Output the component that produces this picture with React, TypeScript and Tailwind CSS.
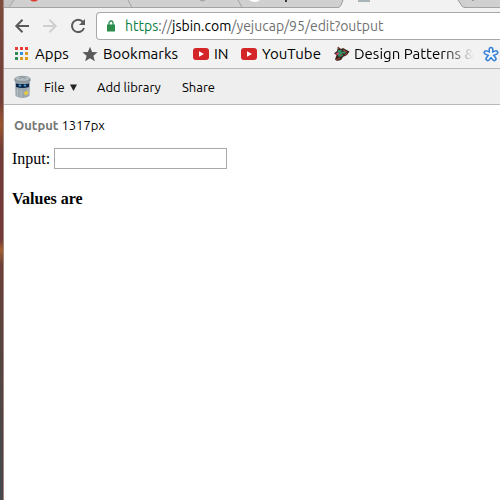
import type { ReactNode } from 'react'

function TabStrip() {
  return (
    <div className="h-2 overflow-hidden bg-[#d0d0d0]">
      <svg width="496" height="8" viewBox="4 0 496 8" className="block" aria-hidden="true">
        <path d="M4 0H14L9 7H4Z" fill="#c6c6c6" />
        <path d="M4 7.5H500" stroke="#a3a3a3" />
        <path d="M9 7.5L14 0M128 0L132 7.5M238 0L242 7.5" stroke="#a3a3a3" fill="none" />
        <path d="M343 0L341 5Q340 7 338 8H466Q463 7 462 6L458 0Z" fill="#f2f2f2" />
        <path d="M343 0L341 5Q340 7 338 7.5M458 0L462 6Q463 7.5 466 7.5" stroke="#999" fill="none" />
        <path d="M30 0H38Q34 3 30 0Z" fill="#e2362b" />
        <path d="M249 0H260Q255 4 249 0Z" fill="#fff" />
        <path d="M200 0Q203 2 205 0" stroke="#999" fill="none" />
        <path d="M286 0V2" stroke="#333" strokeWidth="2" />
        <path d="M358 0H370V2H358Z" fill="#a9b4b9" />
        <path d="M473 0V1" stroke="#666" fill="none" />
      </svg>
    </div>
  )
}

function NavButton({ label, children, disabled }: { label: string; children: ReactNode; disabled?: boolean }) {
  return (
    <button type="button" aria-label={label} disabled={disabled} className="w-4 h-4 shrink-0">
      <svg width="16" height="16" viewBox="0 0 16 16" fill="none" stroke={disabled ? '#cfcfcf' : '#5a5a5a'} strokeWidth="2">
        {children}
      </svg>
    </button>
  )
}

function Toolbar() {
  return (
    <div className="h-8 pl-[10px] pt-1 flex items-start">
      <div className="h-7 flex items-center gap-3 shrink-0">
        <NavButton label="Back">
          <path d="M15 8H3M8.5 1.8L2.3 8L8.5 14.2" />
        </NavButton>
        <NavButton label="Forward" disabled>
          <path d="M1 8H13M7.5 1.8L13.7 8L7.5 14.2" />
        </NavButton>
        <NavButton label="Reload">
          <path d="M13 4A6.2 6.2 0 1 0 14 10" />
          <path d="M15 1V7H9Z" fill="#5a5a5a" stroke="none" />
        </NavButton>
      </div>
      <div className="ml-[10px] flex-1 min-w-0 h-7 pl-[10px] flex items-center bg-white border border-r-0 border-[#a8a8a8] rounded-l-sm">
        <svg width="8" height="12" viewBox="0 0 8 12" className="shrink-0" aria-hidden="true">
          <path d="M0 4.5H8V11.5H0Z" fill="#2b8c4b" />
          <path d="M2 5V3A2 2 0 0 1 6 3V5" stroke="#2b8c4b" strokeWidth="1.3" fill="none" />
        </svg>
        <a href="#" className="ml-[10px] text-[14px] leading-6 whitespace-nowrap text-[#707070]">
          <span className="text-[#0b8040]">https</span>://<span className="text-black">jsbin.com</span>/yejucap/95/edit?output
        </a>
      </div>
    </div>
  )
}

function YouTubeIcon() {
  return (
    <svg width="16" height="16" viewBox="0 0 16 16" className="shrink-0" aria-hidden="true">
      <rect x="0" y="2" width="16" height="12" rx="3" fill="#d42428" />
      <path d="M6 5.2L11 8L6 10.8Z" fill="#fff" />
    </svg>
  )
}

const APP_DOTS = [
  ['#ea3939', '#ea3939', '#ea3939'],
  ['#2e8b57', '#2f8fe0', '#dc9a22'],
  ['#2e8b57', '#dc9a22', '#dc9a22'],
]

function BookmarksBar() {
  return (
    <nav className="h-7 pl-[10px] flex items-center text-[15px] leading-6 whitespace-nowrap text-black overflow-hidden">
      <a href="#" className="w-[68px] shrink-0 flex items-center gap-[5px]">
        <svg width="16" height="16" viewBox="0 0 16 16" className="shrink-0" aria-hidden="true">
          {APP_DOTS.map((row, y) =>
            row.map((fill, x) => <rect key={`${x}-${y}`} x={1 + x * 5} y={1 + y * 5} width="3" height="3" fill={fill} />),
          )}
        </svg>
        Apps
      </a>
      <a href="#" className="w-[111px] shrink-0 flex items-center gap-[5px]">
        <svg width="16" height="16" viewBox="0 0 16 16" className="shrink-0" aria-hidden="true">
          <path d="M8 .8L10.1 5.9L15.6 6.2L11.4 9.8L12.8 15.2L8 12.2L3.2 15.2L4.6 9.8L.4 6.2L5.9 5.9Z" fill="#5a5a5a" />
        </svg>
        Bookmarks
      </a>
      <a href="#" className="w-12 shrink-0 flex items-center gap-[5px]">
        <YouTubeIcon />
        IN
      </a>
      <a href="#" className="w-[93px] shrink-0 flex items-center gap-[5px]">
        <YouTubeIcon />
        YouTube
      </a>
      <a href="#" className="w-[149px] shrink-0 flex items-center gap-1">
        <svg width="16" height="16" viewBox="0 0 16 16" className="shrink-0" aria-hidden="true">
          <path d="M4 .5L7 3L9 2L15.5 5.5L13 9L9 11L7 14L3 15L1 13.5L2.5 9L0 7.5L3 5Z" fill="#3b2520" />
          <path d="M4 4L8 4L7 6L12 5L11 8L8 7L9 10L5 11L3 8Z" fill="#2f8f68" />
          <path d="M1 8L5 6L4 9Z" fill="#e34467" />
          <path d="M4 1L5 3M9 4L13 6M6 10L8 8M11 9L13 7M2 14L6 12" stroke="#b04a34" />
        </svg>
        <span className="bg-linear-to-r from-black from-75% to-transparent bg-clip-text text-transparent">
          Design Patterns &amp;
        </span>
      </a>
      <a href="#" aria-label="Bookmark" className="shrink-0">
        <svg width="16" height="16" viewBox="0 0 16 16" aria-hidden="true">
          <g fill="none" strokeLinecap="round">
            <path d="M8 8.5V3.2M8 8.5L13 6.5M8 8.5L11.2 12.8M8 8.5L4.8 12.8M8 8.5L3 6.5" stroke="#3580d6" strokeWidth="5" />
            <path d="M8 8.5V3.2M8 8.5L13 6.5M8 8.5L11.2 12.8M8 8.5L4.8 12.8M8 8.5L3 6.5" stroke="#eef4fb" strokeWidth="2" />
          </g>
        </svg>
      </a>
    </nav>
  )
}

function BinLogo() {
  return (
    <svg width="18" height="24" viewBox="0 0 18 24" className="shrink-0" aria-hidden="true">
      <path d="M2 5H17L16.5 21Q9.5 25 2.5 21Z" fill="#9ba6ae" />
      <path d="M4.5 14V21M8 15V22M15 13V20" stroke="#b7c0c6" />
      <path d="M1 5Q2 .8 9.5 .8T18 5Q17 8 9.5 8T1 5Z" fill="#8e999f" />
      <ellipse cx="9.5" cy="3.6" rx="7" ry="2.2" fill="#b3bcc1" />
      <path d="M6 3.5Q9.5 1 13 3.5" stroke="#858f95" fill="none" />
      <path d="M3 8.5Q9.5 9.5 16 8.5V12Q9.5 14 3 12Z" fill="#0d2548" />
      <ellipse cx="7" cy="10.5" rx="1.4" ry="1.1" fill="#479fce" />
      <ellipse cx="12" cy="10.5" rx="1.4" ry="1.1" fill="#479fce" />
      <path d="M10.5 18L14 15.5L15.5 18L12.5 20.5Z" fill="#e8c83c" />
    </svg>
  )
}

function BinMenu() {
  return (
    <header className="h-9 pl-[9px] flex items-center bg-[#eee] border-b border-[#b8b8b8] text-[13px] leading-5 whitespace-nowrap text-black">
      <BinLogo />
      <button type="button" className="ml-[13px] w-[53px] flex items-center gap-[5px]">
        File
        <svg width="7" height="9" viewBox="0 0 7 9" aria-hidden="true">
          <path d="M0 2.5H7L3.5 9Z" fill="#222" />
        </svg>
      </button>
      <button type="button" className="w-[85px] text-left">Add library</button>
      <button type="button">Share</button>
    </header>
  )
}

export default function App() {
  return (
    <div className="min-h-screen flex bg-white font-['Ubuntu','Noto_Sans',sans-serif]">
      <div className="w-1 shrink-0 border-r border-[#a68480] bg-[linear-gradient(#7d4c3d,#713d38_20%,#9a552d_25%,#703c38_30%,#733a39_48%,#a06030_50%,#6b4038_53%,#554440_70%,#45494d)]" />
      <div className="flex-1 min-w-0">
        <div className="bg-[#f2f2f2] border-b border-[#b8b8b8]">
          <TabStrip />
          <Toolbar />
          <BookmarksBar />
        </div>
        <BinMenu />
        <main className="pt-[10px]">
          <p className="pl-[10px] text-[13px] leading-5 text-black">
            <span className="font-bold text-[#777]">Output</span> 1317px
          </p>
          <div className="pl-2 pt-[13px] font-['Liberation_Serif',serif] text-[16px] leading-5 text-black">
            <div className="flex items-center gap-1">
              <label htmlFor="value">Input:</label>
              <input id="value" type="text" className="w-[173px] h-[21px] px-px border border-[#a9a9a9] bg-white" />
            </div>
            <h4 className="mt-5 font-bold">Values are</h4>
          </div>
        </main>
      </div>
    </div>
  )
}
